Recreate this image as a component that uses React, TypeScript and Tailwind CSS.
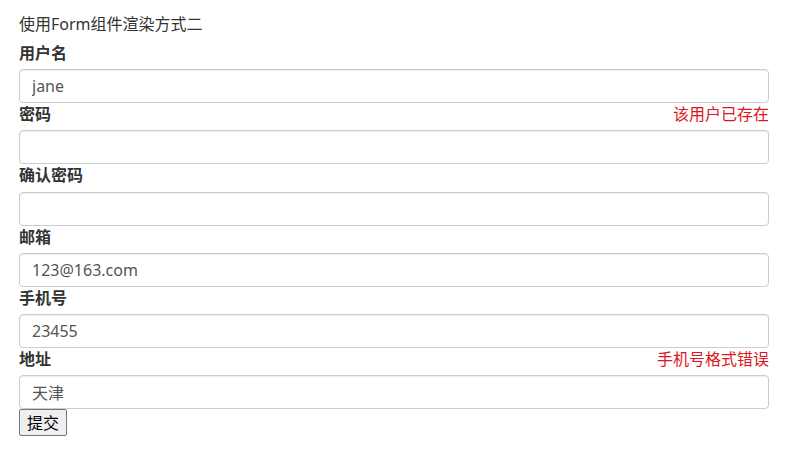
import React from "react";

type Field = {
  label: string;
  value: string;
  error?: string;
  type?: string;
};

const fields: Field[] = [
  { label: "用户名", value: "jane" },
  { label: "密码", value: "", error: "该用户已存在", type: "password" },
  { label: "确认密码", value: "", type: "password" },
  { label: "邮箱", value: "123@163.com" },
  { label: "手机号", value: "23455" },
  { label: "地址", value: "天津", error: "手机号格式错误" },
];

export default function App() {
  return (
    <div
      className="min-h-screen bg-white text-[#333] px-[19px] pt-[12px]"
      style={{ fontFamily: '"Noto Sans", "Noto Sans CJK SC", sans-serif' }}
    >
      <div className="text-[16px] leading-[24px] mb-[6px]">使用Form组件渲染方式二</div>
      <form className="w-[750px]" onSubmit={(e) => e.preventDefault()}>
        {fields.map((f) => (
          <div key={f.label}>
            <div className="flex items-start justify-between h-[27.2px] text-[16px] leading-[23px]">
              <label className="font-bold">{f.label}</label>
              {f.error && <span className="text-[#e0161c]">{f.error}</span>}
            </div>
            <input
              type={f.type ?? "text"}
              defaultValue={f.value}
              className="block w-full h-[34px] px-[12px] border border-[#ccc] rounded-[4px] text-[16px] text-[#555] shadow-[inset_0_1px_1px_rgba(0,0,0,0.075)] outline-none"
            />
          </div>
        ))}
        <button
          type="submit"
          className="h-[27px] px-[7px] text-[16px] text-black bg-[#efefef] border border-[#767676] rounded-[2px]"
        >
          提交
        </button>
      </form>
    </div>
  );
}
